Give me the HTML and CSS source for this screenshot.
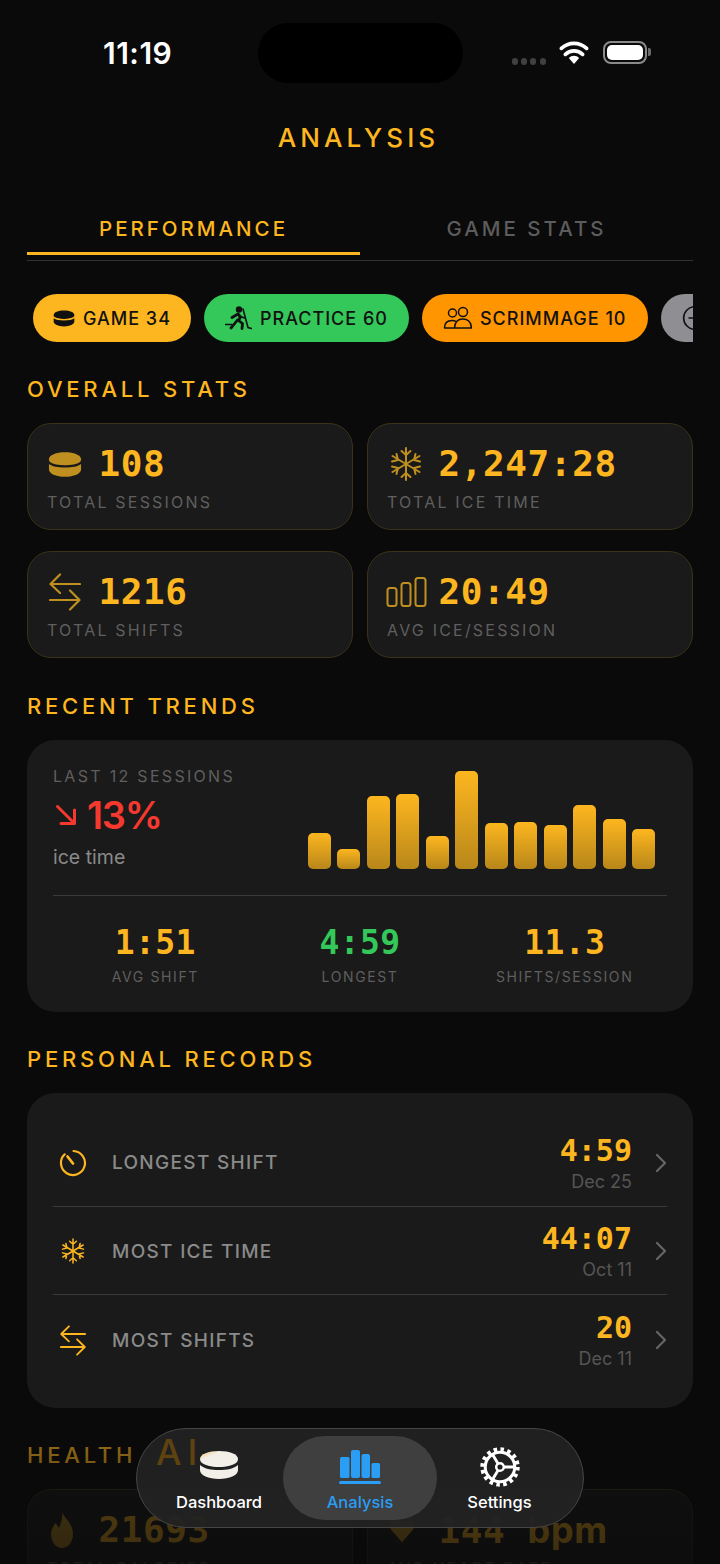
FILE: index.html
```html
<!DOCTYPE html>
<html lang="en">
<head>
<meta charset="utf-8">
<title>Analysis</title>
<link rel="stylesheet" href="styles.css">
</head>
<body>
<svg class="defs" width="0" height="0" aria-hidden="true">
  <symbol id="puck" viewBox="0 0 36 28">
    <path d="M1 8.500C1 3.800 8.600 1 18 1s17 2.800 17 7.500c0 1-.4 2-1 2.800C30.500 13.500 24.800 14.800 18 14.800S5.500 13.500 2 11.300C1.400 10.500 1 9.500 1 8.500Z" fill="currentColor"/>
    <path d="M1 13.500C4 16 10.500 17.200 18 17.200s14-1.200 17-3.700V19C35 23.800 27.400 27 18 27S1 23.800 1 19Z" fill="currentColor"/>
  </symbol>
  <symbol id="flake" viewBox="0 0 32 34" fill="none" stroke="currentColor" stroke-width="2" stroke-linecap="round" stroke-linejoin="round">
    <path d="M16 1v32M11.500 4 16 8l4.500-4M11.500 30l4.500-4 4.500 4"/>
    <path d="M2.500 9l27 16M2 14.500 8 13l-1.500-6M30 19.500 24 21l1.500 6"/>
    <path d="M29.500 9l-27 16M30 14.500 24 13l1.500-6M2 19.500 8 21l-1.500 6"/>
  </symbol>
  <symbol id="swap" viewBox="0 0 32 38" fill="none" stroke="currentColor" stroke-width="2.200" stroke-linecap="round" stroke-linejoin="round">
    <path d="M31 11H2M11 1.500 1.500 11l9.500 9"/>
    <path d="M1 27h29M21 17.500l9.500 9.500-9.500 9.500"/>
  </symbol>
  <linearGradient id="puckglow" x1="0" y1="0" x2="1" y2="1">
    <stop offset="0" stop-color="#f7c96b"/>
    <stop offset=".3" stop-color="#f2efe9"/>
  </linearGradient>
</svg>

<main class="page">
  <header class="status">
    <span class="clock">11:19</span>
    <span class="island"></span>
    <span class="status-icons">
      <span class="dots"><i></i><i></i><i></i><i></i></span>
      <svg class="wifi" viewBox="0 0 30 24"><path d="M15 24 9.800 18a7.400 7.400 0 0 1 10.400 0Z" fill="#fff"/><path d="M6.400 14.400a12.200 12.200 0 0 1 17.200 0M2.400 8.400a18.200 18.200 0 0 1 25.200 0" fill="none" stroke="#fff" stroke-width="3.600" stroke-linecap="round"/></svg>
      <span class="battery"><b></b></span><span class="nub"></span>
    </span>
  </header>

  <h1 class="title">ANALYSIS</h1>

  <nav class="tabs">
    <span class="tab tab-on">PERFORMANCE</span>
    <span class="tab">GAME STATS</span>
  </nav>

  <div class="pills">
    <span class="pill pill-game"><svg class="pill-ico-s"><use href="#puck"/></svg>GAME 34</span>
    <span class="pill pill-practice">
      <svg class="pill-ico-p" viewBox="0 0 27 24"><circle cx="14" cy="3.500" r="3.200" fill="currentColor"/><path d="M7 11.500 13 8l2.500 3-2 3.500 4 3 -.5 5M12.500 14 8.500 19l-2.500 3" fill="none" stroke="currentColor" stroke-width="2.800" stroke-linecap="round" stroke-linejoin="round"/><path d="M18 3l5 18.500 3.500 1M.5 18.500H7M15.500 10.500l4 1.500" fill="none" stroke="currentColor" stroke-width="1.600" stroke-linecap="round"/></svg>
      PRACTICE 60</span>
    <span class="pill pill-scrim">
      <svg class="pill-ico-g" viewBox="0 0 28 24" fill="none" stroke="currentColor" stroke-width="1.500" stroke-linecap="round"><circle cx="9" cy="7" r="4"/><circle cx="19.500" cy="6" r="4.500"/><path d="M1 22c0-5 3-7.500 7.500-7.500 1.500 0 3 .3 4 1M1 22h10M11 22c.3-6 3.500-9 8.500-9s8 3 8.500 9Z"/></svg>
      SCRIMMAGE 10</span>
    <span class="pill pill-more">
      <svg class="pill-ico" viewBox="0 0 24 24" fill="none" stroke="currentColor" stroke-width="1.500"><circle cx="12" cy="12" r="10.500"/><path d="M12 5v7H6"/></svg>
    </span>
  </div>

  <h2 class="sec">OVERALL STATS</h2>
  <section class="grid">
    <article class="stat">
      <div class="stat-top"><span class="stat-ico"><svg class="ico-puck"><use href="#puck"/></svg></span><span class="stat-val">108</span></div>
      <div class="stat-lab">TOTAL SESSIONS</div>
    </article>
    <article class="stat">
      <div class="stat-top"><span class="stat-ico"><svg class="ico-flake"><use href="#flake"/></svg></span><span class="stat-val">2,247:28</span></div>
      <div class="stat-lab">TOTAL ICE TIME</div>
    </article>
    <article class="stat">
      <div class="stat-top"><span class="stat-ico"><svg class="ico-swap"><use href="#swap"/></svg></span><span class="stat-val">1216</span></div>
      <div class="stat-lab">TOTAL SHIFTS</div>
    </article>
    <article class="stat">
      <div class="stat-top"><span class="stat-ico">
        <svg class="ico-bars" viewBox="0 0 40 30" fill="none" stroke="currentColor" stroke-width="2"><rect x="1" y="11" width="9" height="18" rx="2.500"/><rect x="15" y="6" width="9" height="23" rx="2.500"/><rect x="29" y="1" width="10" height="28" rx="2.500"/></svg>
      </span><span class="stat-val">20:49</span></div>
      <div class="stat-lab">AVG ICE/SESSION</div>
    </article>
  </section>

  <h2 class="sec sec-trend">RECENT TRENDS</h2>
  <section class="panel trend">
    <div class="trend-top">
      <div class="trend-info">
        <div class="trend-cap">LAST 12 SESSIONS</div>
        <div class="trend-pct">
          <svg class="trend-arrow" viewBox="0 0 22 22" fill="none" stroke="currentColor" stroke-width="3" stroke-linecap="round" stroke-linejoin="round"><path d="M2.500 2.500 19.500 19.500M19.500 6v13.500H6"/></svg>
          <span>13%</span>
        </div>
        <div class="trend-sub">ice time</div>
      </div>
      <div class="bars">
        <i style="height:36px"></i><i style="height:20px"></i><i style="height:73px"></i><i style="height:75px"></i><i style="height:33px"></i><i style="height:98px"></i><i style="height:46px"></i><i style="height:47px"></i><i style="height:44px"></i><i style="height:64px"></i><i style="height:50px"></i><i style="height:40px"></i>
      </div>
    </div>
    <div class="trend-stats">
      <div class="ts"><div class="ts-val">1:51</div><div class="ts-lab">AVG SHIFT</div></div>
      <div class="ts"><div class="ts-val ts-green">4:59</div><div class="ts-lab">LONGEST</div></div>
      <div class="ts"><div class="ts-val">11.3</div><div class="ts-lab">SHIFTS/SESSION</div></div>
    </div>
  </section>

  <h2 class="sec">PERSONAL RECORDS</h2>
  <section class="panel records">
    <div class="rec">
      <span class="rec-ico"><svg class="ico-watch" viewBox="0 0 28 28" fill="none" stroke="currentColor" stroke-width="2.200" stroke-linecap="round"><path d="M14.500 2a12 12 0 1 1-8.800 3.300"/><path d="M8.500 7.500 14 14.500" stroke-width="2.800"/></svg></span>
      <span class="rec-lab">LONGEST SHIFT</span>
      <span class="rec-right"><span class="rec-val">4:59</span><span class="rec-date">Dec 25</span></span>
      <svg class="chev" viewBox="0 0 12 20" fill="none" stroke="currentColor" stroke-width="2.200" stroke-linecap="round" stroke-linejoin="round"><path d="M2 2l8 8-8 8"/></svg>
    </div>
    <div class="rec">
      <span class="rec-ico"><svg class="ico-flake-s"><use href="#flake"/></svg></span>
      <span class="rec-lab">MOST ICE TIME</span>
      <span class="rec-right"><span class="rec-val">44:07</span><span class="rec-date">Oct 11</span></span>
      <svg class="chev" viewBox="0 0 12 20" fill="none" stroke="currentColor" stroke-width="2.200" stroke-linecap="round" stroke-linejoin="round"><path d="M2 2l8 8-8 8"/></svg>
    </div>
    <div class="rec">
      <span class="rec-ico"><svg class="ico-swap-s"><use href="#swap"/></svg></span>
      <span class="rec-lab">MOST SHIFTS</span>
      <span class="rec-right"><span class="rec-val">20</span><span class="rec-date">Dec 11</span></span>
      <svg class="chev" viewBox="0 0 12 20" fill="none" stroke="currentColor" stroke-width="2.200" stroke-linecap="round" stroke-linejoin="round"><path d="M2 2l8 8-8 8"/></svg>
    </div>
  </section>

  <h2 class="sec">HEALTH</h2>
  <section class="grid">
    <article class="stat">
      <div class="stat-top"><span class="stat-ico"><svg class="ico-fire" viewBox="0 0 24 36"><path d="M12 0c2 6 11 11 11 22 0 8-5 14-11 14S1 30 1 22c0-5 3-8 4-11 2 2 3 3 4 5 2-5 4-10 3-16Z" fill="currentColor"/></svg></span><span class="stat-val">21693</span></div>
      <div class="stat-lab">TOTAL CALORIES</div>
    </article>
    <article class="stat">
      <div class="stat-top"><span class="stat-ico"><svg class="ico-fire" viewBox="0 0 30 28"><path d="M15 28 2 13C-2 6 3 0 8 0c3 0 6 2 7 5 1-3 4-5 7-5 5 0 10 6 6 13Z" fill="currentColor"/></svg></span><span class="stat-val">144 <span class="stat-unit">bpm</span></span></div>
      <div class="stat-lab">AVG HEART RATE</div>
    </article>
  </section>
</main>

<div class="fade"></div>

<nav class="dock">
  <span class="dock-glint">AI</span>
  <span class="dock-item dock-left">
    <svg class="dock-puck" viewBox="0 0 40 30"><path d="M1 9C1 4 9.500 1 20 1s19 3 19 8c0 1-.3 2-1 3-3.500 3.500-10 5-18 5S5.500 15.500 2 12C1.300 11 1 10 1 9Z" fill="url(#puckglow)"/><path d="M1 15c4 3.700 11 5 19 5s15-1.300 19-5v5c0 5.500-8.500 9-19 9S1 25.500 1 20Z" fill="#f2efe9"/></svg>
    <span>Dashboard</span>
  </span>
  <span class="dock-item dock-on">
    <svg class="dock-bars" viewBox="0 0 42 34" fill="#2a9df4"><rect x="1" y="7" width="9.500" height="21" rx="1.500"/><rect x="12" y="0" width="9" height="28" rx="2"/><rect x="22.500" y="4" width="8.500" height="24" rx="2"/><rect x="32.500" y="13" width="8.500" height="15" rx="1.500"/><rect x="0" y="31" width="42" height="3" rx="1.500"/></svg>
    <span>Analysis</span>
  </span>
  <span class="dock-item dock-right">
    <svg class="dock-gear" viewBox="0 0 42 42"><circle cx="21" cy="21" r="15.500" fill="none" stroke="#fff" stroke-width="3.200"/><circle cx="21" cy="21" r="4" fill="none" stroke="#fff" stroke-width="2.600"/><path d="M24.500 21H36M19 17.500 13 7.500M19 24.500 13 34.500" stroke="#fff" stroke-width="3"/><circle cx="21" cy="21" r="18.500" fill="none" stroke="#fff" stroke-width="4.400" stroke-dasharray="3.700 3.560"/></svg>
    <span>Settings</span>
  </span>
</nav>
</body>
</html>
```

FILE: styles.css
```css
* { box-sizing: border-box; }
html, body { margin: 0; height: 1564px; overflow: hidden; background: #0a0a0a; }
body { position: relative; font-family: Inter, "Liberation Sans", sans-serif; color: #fff; }
.defs { position: absolute; }
.page { height: 1564px; overflow: hidden; padding: 23px 27px 0; }

.status { display: flex; align-items: center; height: 60px; }
.clock { width: 231px; padding-left: 76px; font-size: 30px; font-weight: 600; letter-spacing: .5px; line-height: 60px; }
.island { width: 205px; height: 60px; background: #000; border-radius: 30px; }
.status-icons { display: flex; align-items: center; margin-left: 49px; height: 60px; }
.dots { display: flex; gap: 3.200px; margin-top: 16px; }
.dots i { width: 6px; height: 7px; border-radius: 3px; background: #404040; }
.wifi { width: 30px; height: 24px; margin: -2px 0 0 13.500px; }
.battery { width: 44px; height: 23px; margin-left: 13.500px; margin-top: -2px; border: 2px solid #8a8a8a; border-radius: 8px; padding: 2px; }
.battery b { display: block; height: 100%; background: #fff; border-radius: 5px; }
.nub { width: 3px; height: 8px; margin: -2px 0 0 1px; background: #6a6a6a; border-radius: 0 2px 2px 0; }

.title { margin: 38px 0 0; padding-right: 3px; text-align: center; font-size: 26px; line-height: 34px; font-weight: 500; letter-spacing: 4.100px; color: #fdb61f; }

.tabs { display: flex; margin-top: 50px; border-bottom: 1px solid #333; }
.tab { flex: 1; height: 50px; margin-bottom: 5px; padding-top: 12px; text-align: center; font-size: 20.500px; line-height: 24px; font-weight: 500; letter-spacing: 3px; color: #5c5c5c; border-bottom: 3px solid transparent; }
.tab-on { color: #fdb61f; border-bottom-color: #fdb61f; }

.pills { display: flex; gap: 13px; margin-top: 33px; padding-left: 6px; overflow: hidden; }
.pill { flex: none; display: flex; align-items: center; gap: 8px; height: 48px; padding: 0 21px; border-radius: 24px; color: #111; font-size: 18px; font-weight: 500; letter-spacing: 1px; white-space: nowrap; }
.pill-game { background: #fdb61f; padding: 0 20px; }
.pill-practice { background: #34c759; }
.pill-scrim { background: #ff9500; }
.pill-more { background: #8e8e93; padding-right: 0; width: 60px; }
.pill-ico-s { width: 22px; height: 17px; }
.pill-ico-p { width: 27px; height: 24px; }
.pill-ico-g { width: 29px; height: 24px; }
.pill-ico { width: 26px; height: 26px; }

.sec { margin: 35px 0 22px; font-size: 22px; line-height: 24px; font-weight: 500; letter-spacing: 3.800px; color: #fdb61f; }
.sec-trend { margin-top: 36px; }

.grid { display: grid; grid-template-columns: 326px 326px; column-gap: 14px; row-gap: 21px; }
.stat { height: 107px; padding: 18px 19px 0; background: #1a1a1a; border: 1px solid #3a3218; border-radius: 24px; }
.stat-top { display: flex; align-items: center; gap: 11.500px; height: 44px; }
.stat-ico { width: 40px; display: flex; align-items: center; justify-content: center; color: #bf8f1f; }
.stat-val { font-family: "DejaVu Sans Mono", monospace; font-size: 36px; line-height: 44px; font-weight: 700; letter-spacing: .6px; color: #fdb61f; white-space: nowrap; }
.stat-unit { font-family: Inter, sans-serif; }
.stat-lab { margin-top: 6px; font-size: 16px; line-height: 20px; letter-spacing: 2.200px; color: #5f5f5f; white-space: nowrap; }
.ico-puck { width: 34px; height: 27px; margin-right: 4px; }
.ico-flake { width: 32px; height: 34px; margin-right: 2px; }
.ico-swap { width: 32px; height: 38px; margin-right: 4px; }
.ico-bars { width: 41px; height: 30px; margin-left: -2px; }
.ico-fire { width: 26px; height: 36px; margin-right: 10px; }

.panel { background: #1a1a1a; border-radius: 28px; }
.trend { height: 272px; padding: 26px 26px 0; }
.trend-top { display: flex; height: 130px; border-bottom: 1px solid #3a3a3a; }
.trend-info { width: 255px; }
.trend-cap { font-size: 16px; line-height: 20px; letter-spacing: 2.300px; color: #5f5f5f; white-space: nowrap; }
.trend-pct { display: flex; align-items: center; gap: 10px; height: 44px; margin-top: 7px; color: #f5392f; font-size: 38px; font-weight: 600; letter-spacing: -1.300px; }
.trend-arrow { width: 22px; height: 22px; margin-left: 2px; }
.trend-sub { margin-top: 7px; font-size: 19.500px; line-height: 26px; color: #8a8a8a; }
.bars { display: flex; align-items: flex-end; justify-content: space-between; width: 347px; height: 103px; }
.bars i { width: 23px; border-radius: 5px; background: linear-gradient(#fdb61f, #b8871a); }
.trend-stats { display: grid; grid-template-columns: repeat(3, 1fr); margin-top: 27px; text-align: center; }
.ts-val { font-family: "DejaVu Sans Mono", monospace; font-size: 33px; line-height: 40px; font-weight: 700; letter-spacing: .4px; color: #fdb61f; }
.ts-green { color: #34c759; }
.ts-lab { margin-top: 4px; font-size: 14px; line-height: 20px; letter-spacing: 1.600px; color: #5f5f5f; white-space: nowrap; }

.records { height: 315px; padding: 25px 26px 0; }
.rec { display: flex; align-items: center; height: 88.500px; padding-top: 2px; color: #8a8a8a; border-bottom: 1px solid #3a3a3a; }
.rec:last-child { border-bottom: 0; }
.rec-ico { width: 59px; padding-right: 20px; display: flex; justify-content: center; color: #fdb61f; }
.ico-watch { width: 28px; height: 28px; }
.ico-flake-s { width: 24px; height: 26px; }
.ico-swap-s { width: 26px; height: 31px; }
.rec-lab { flex: 1; font-size: 19px; font-weight: 500; letter-spacing: 1.300px; }
.rec-right { display: flex; flex-direction: column; align-items: flex-end; padding-top: 1px; }
.rec-val { font-family: "DejaVu Sans Mono", monospace; font-size: 30px; line-height: 36px; font-weight: 700; color: #fdb61f; }
.rec-date { margin-top: 1px; font-size: 18px; line-height: 24px; color: #555; }
.chev { width: 12px; height: 20px; margin-left: 23px; color: #666; }

.fade { position: absolute; left: 0; right: 0; top: 1410px; height: 154px; background: linear-gradient(rgba(10,10,10,.3), rgba(10,10,10,.72) 60%, rgba(10,10,10,.8)); }

.dock { position: absolute; left: 136px; top: 1428px; width: 448px; height: 100px; padding: 7px 8px 7px 7px; display: grid; grid-template-columns: 139px 154px 1fr; background: rgba(34,34,34,.93); border: 1px solid #454545; border-radius: 50px; }
.dock-glint { position: absolute; left: 19px; top: 5px; font-size: 36px; line-height: 36px; font-weight: 500; letter-spacing: 6px; color: #5e4310; }
.dock-item { position: relative; display: flex; flex-direction: column; align-items: center; justify-content: flex-end; padding-bottom: 7px; border-radius: 42px; font-size: 16.500px; line-height: 22px; font-weight: 500; }
.dock-left { padding-left: 11px; }
.dock-right { padding-right: 13px; }
.dock-on { background: #3f3f3f; color: #2a9df4; }
.dock-puck { width: 40px; height: 30px; margin-bottom: 11px; }
.dock-bars { width: 42px; height: 34px; margin-bottom: 7px; }
.dock-gear { width: 40px; height: 40px; margin-bottom: 4px; }
```
